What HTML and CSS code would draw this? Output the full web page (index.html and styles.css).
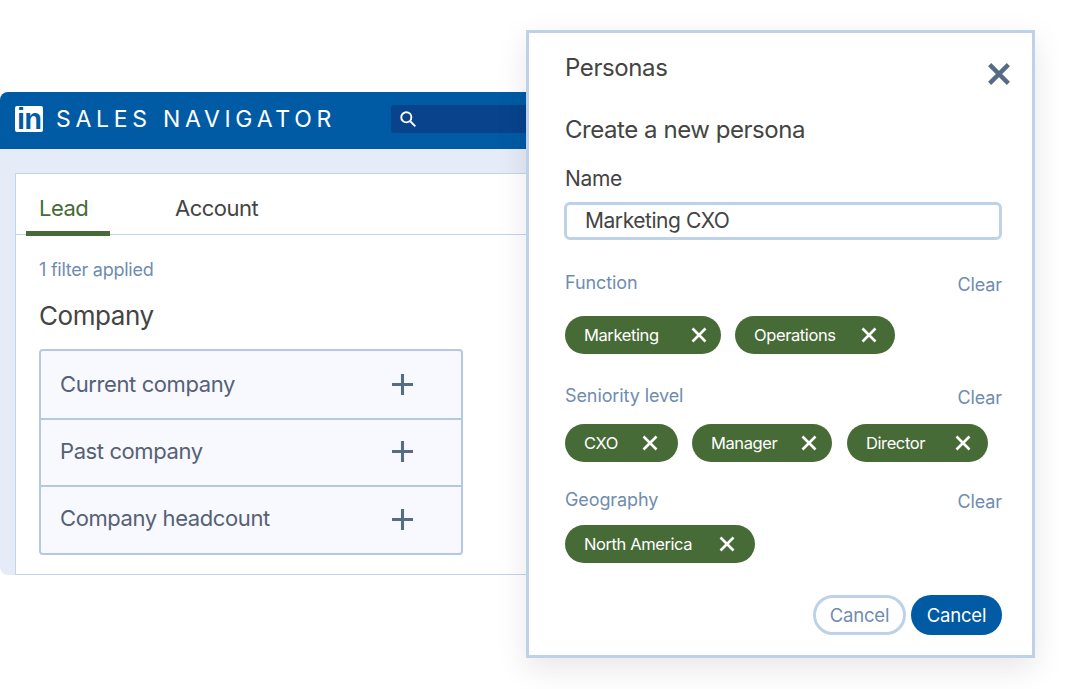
FILE: index.html
```html
<!DOCTYPE html>
<html lang="en">
<head>
    <meta charset="UTF-8">
    <title>Personas</title>
    <link rel="stylesheet" href="styles.css">
</head>
<body>

    <!-- Sales Navigator window behind the dialog -->
    <div class="app">
        <div class="app-header">
            <div class="logo">in</div>
            <div class="brand">SALES NAVIGATOR</div>
            <div class="search">
                <svg class="search-icon" viewBox="0 0 16 16"><circle cx="6.5" cy="6.5" r="4.5"/><path d="M10 10l4.5 4.5"/></svg>
            </div>
        </div>
        <div class="app-body">
            <div class="card">
                <div class="tabs">
                    <div class="tab active">Lead</div>
                    <div class="tab">Account</div>
                </div>
                <div class="card-content">
                    <p class="applied">1 filter applied</p>
                    <h2 class="section-title">Company</h2>
                    <div class="filter-list">
                        <div class="filter-row">Current company
                            <svg class="plus" viewBox="0 0 22 22"><path d="M11 0v22M0 11h22"/></svg>
                        </div>
                        <div class="filter-row">Past company
                            <svg class="plus" viewBox="0 0 22 22"><path d="M11 0v22M0 11h22"/></svg>
                        </div>
                        <div class="filter-row">Company headcount
                            <svg class="plus" viewBox="0 0 22 22"><path d="M11 0v22M0 11h22"/></svg>
                        </div>
                    </div>
                </div>
            </div>
        </div>
    </div>

    <!-- Persona dialog -->
    <div class="modal">
        <div class="modal-top">
            <div class="modal-title">Personas</div>
            <svg class="close" viewBox="0 0 20 20"><path d="M1.5 1.5l17 17M18.5 1.5l-17 17"/></svg>
        </div>
        <div class="modal-subtitle">Create a new persona</div>
        <label class="name-label">Name</label>
        <div class="name-input">Marketing CXO</div>

        <div class="group-head group-function">
            <span class="group-label">Function</span>
            <span class="clear">Clear</span>
        </div>
        <div class="chips chips-function">
            <div class="chip chip-marketing">Marketing <svg viewBox="0 0 16 16"><path d="M1.5 1.5l13 13M14.5 1.5l-13 13"/></svg></div>
            <div class="chip chip-operations">Operations <svg viewBox="0 0 16 16"><path d="M1.5 1.5l13 13M14.5 1.5l-13 13"/></svg></div>
        </div>

        <div class="group-head group-seniority">
            <span class="group-label">Seniority level</span>
            <span class="clear">Clear</span>
        </div>
        <div class="chips chips-seniority">
            <div class="chip chip-cxo">CXO <svg viewBox="0 0 16 16"><path d="M1.5 1.5l13 13M14.5 1.5l-13 13"/></svg></div>
            <div class="chip chip-manager">Manager <svg viewBox="0 0 16 16"><path d="M1.5 1.5l13 13M14.5 1.5l-13 13"/></svg></div>
            <div class="chip chip-director">Director <svg viewBox="0 0 16 16"><path d="M1.5 1.5l13 13M14.5 1.5l-13 13"/></svg></div>
        </div>

        <div class="group-head group-geography">
            <span class="group-label">Geography</span>
            <span class="clear">Clear</span>
        </div>
        <div class="chips chips-geography">
            <div class="chip chip-america">North America <svg viewBox="0 0 16 16"><path d="M1.5 1.5l13 13M14.5 1.5l-13 13"/></svg></div>
        </div>

        <div class="modal-actions">
            <div class="btn btn-outline">Cancel</div>
            <div class="btn btn-primary">Cancel</div>
        </div>
    </div>

</body>
</html>
```

FILE: styles.css
```css
html, body {
    height: 100%;
}

body {
    margin: 0;
    background-color: #fff;
    font-family: Inter, "Liberation Sans", sans-serif;
    overflow: hidden;
    position: relative;
}

.app {
    width: 540px;
    height: 483px;
    margin-top: 92px;
    display: flex;
    flex-direction: column;
    background-color: #e6ecf7;
    border-radius: 8px 0 0 8px;
}

.app-header {
    height: 57px;
    flex-shrink: 0;
    display: flex;
    align-items: center;
    padding-left: 15px;
    background-color: #005ba4;
    border-radius: 8px 0 0 0;
}

.logo {
    width: 28px;
    height: 26px;
    margin-top: -3px;
    background-color: #fff;
    border-radius: 2px;
    color: #005ba4;
    font-family: "Liberation Sans", sans-serif;
    font-size: 29px;
    font-weight: bold;
    line-height: 27px;
    letter-spacing: -1px;
    text-align: center;
}

.brand {
    width: 335px;
    margin-left: 13px;
    margin-top: -3px;
    color: #fff;
    font-size: 23px;
    letter-spacing: 4.7px;
    white-space: nowrap;
}

.search {
    width: 149px;
    height: 28px;
    margin-top: -3px;
    display: flex;
    align-items: center;
    padding-left: 8px;
    box-sizing: border-box;
    background-color: #08438c;
    border-radius: 3px 0 0 3px;
}

.search-icon {
    width: 18px;
    height: 18px;
    fill: none;
    stroke: #fff;
    stroke-width: 1.7;
}

.app-body {
    flex: 1;
    padding: 24px 0 0 15px;
    display: flex;
}

.card {
    flex: 1;
    background-color: #fff;
    border: 1px solid #c3d5ea;
    border-right: none;
}

.tabs {
    height: 60px;
    display: flex;
    padding-left: 10px;
    border-bottom: 1px solid #c3d5ea;
}

.tab {
    height: 62px;
    box-sizing: border-box;
    padding-left: 13px;
    color: #444;
    font-size: 22px;
    line-height: 68px;
    letter-spacing: -0.5px;
}

.tab.active {
    width: 84px;
    margin-right: 52px;
    margin-bottom: -2px;
    padding-left: 13px;
    color: #476b37;
    border-bottom: 5px solid #476b37;
}

.card-content {
    padding-left: 23px;
}

.applied {
    margin: 24px 0 0;
    color: #6f8cb0;
    font-size: 18px;
    line-height: 22px;
    letter-spacing: -0.25px;
}

.section-title {
    margin: 19px 0 0;
    color: #444;
    font-size: 26px;
    font-weight: normal;
    line-height: 32px;
    letter-spacing: -0.45px;
}

.filter-list {
    width: 424px;
    margin-top: 17px;
    box-sizing: border-box;
    background-color: #f7f9ff;
    border: 2px solid #b6c8e0;
    border-radius: 4px;
}

.filter-row {
    height: 65px;
    display: flex;
    align-items: center;
    justify-content: space-between;
    padding: 0 48px 2px 19px;
    box-sizing: content-box;
    color: #566175;
    font-size: 22px;
    letter-spacing: -0.4px;
}

.filter-row + .filter-row {
    height: 61px;
    padding-bottom: 4px;
    border-top: 2px solid #b6c8e0;
}

.filter-row:last-child {
    height: 62px;
}

.plus {
    width: 21px;
    height: 21px;
    margin-top: 2px;
    fill: none;
    stroke: #566b85;
    stroke-width: 3.2;
}

.modal {
    position: absolute;
    top: 30px;
    left: 526px;
    width: 509px;
    height: 628px;
    box-sizing: border-box;
    padding: 0 30px 0 36px;
    background-color: #fff;
    border: 3px solid #bdd2e8;
    box-shadow: 0 10px 30px rgba(0, 0, 0, 0.1);
}

.modal-top {
    height: 66px;
    display: flex;
    justify-content: space-between;
}

.modal-title {
    padding-top: 20px;
    color: #444;
    font-size: 24px;
    line-height: 30px;
    letter-spacing: -0.4px;
}

.close {
    width: 22px;
    height: 22px;
    margin: 30px -8px 0 0;
    fill: none;
    stroke: #566b85;
    stroke-width: 4;
}

.modal-subtitle {
    margin-top: 16px;
    color: #444;
    font-size: 24px;
    line-height: 30px;
    letter-spacing: -0.45px;
}

.name-label {
    display: block;
    margin-top: 20px;
    color: #444;
    font-size: 21px;
    line-height: 28px;
    letter-spacing: -0.3px;
}

.name-input {
    height: 38px;
    margin: 9px 0 0 -1px;
    box-sizing: border-box;
    padding-left: 18px;
    background-color: #fff;
    border: 3px solid #bdd2e8;
    border-radius: 6px;
    color: #444;
    font-size: 21px;
    line-height: 32px;
    letter-spacing: -0.45px;
}

.group-head {
    display: flex;
    justify-content: space-between;
    color: #6f8cb0;
    font-size: 18px;
    line-height: 22px;
    letter-spacing: -0.1px;
}

.clear {
    padding-top: 2px;
}

.group-function {
    margin-top: 32px;
}

.group-seniority {
    margin-top: 31px;
}

.group-geography {
    margin-top: 27px;
}

.chips {
    display: flex;
    gap: 14px;
}

.chips-function {
    margin-top: 20px;
}

.chips-seniority {
    margin-top: 15px;
}

.chips-geography {
    margin-top: 12px;
}

.chip {
    height: 38px;
    display: flex;
    align-items: center;
    justify-content: space-between;
    box-sizing: border-box;
    padding: 0 14px 0 19px;
    background-color: #476b37;
    border-radius: 19px;
    color: #fff;
    font-size: 16.5px;
    letter-spacing: -0.4px;
}

.chip svg {
    width: 16px;
    height: 16px;
    fill: none;
    stroke: #fff;
    stroke-width: 2.6;
}

.chip-marketing { width: 156px; }
.chip-operations { width: 160px; padding-right: 18px; }
.chip-cxo { width: 113px; padding-right: 20px; }
.chip-manager { width: 140px; padding-right: 15px; }
.chip-director { width: 141px; margin-left: 1px; padding-right: 17px; }
.chip-america { width: 190px; padding-right: 20px; }

.modal-actions {
    display: flex;
    justify-content: flex-end;
    gap: 5px;
    margin-top: 32px;
}

.btn {
    height: 40px;
    box-sizing: border-box;
    border-radius: 20px;
    font-size: 18.5px;
    line-height: 40px;
    letter-spacing: -0.2px;
    text-align: center;
}

.btn-outline {
    width: 93px;
    color: #6f8cb0;
    border: 3px solid #bdd2e8;
    line-height: 34px;
}

.btn-primary {
    width: 91px;
    background-color: #005ba4;
    color: #fff;
}
```
